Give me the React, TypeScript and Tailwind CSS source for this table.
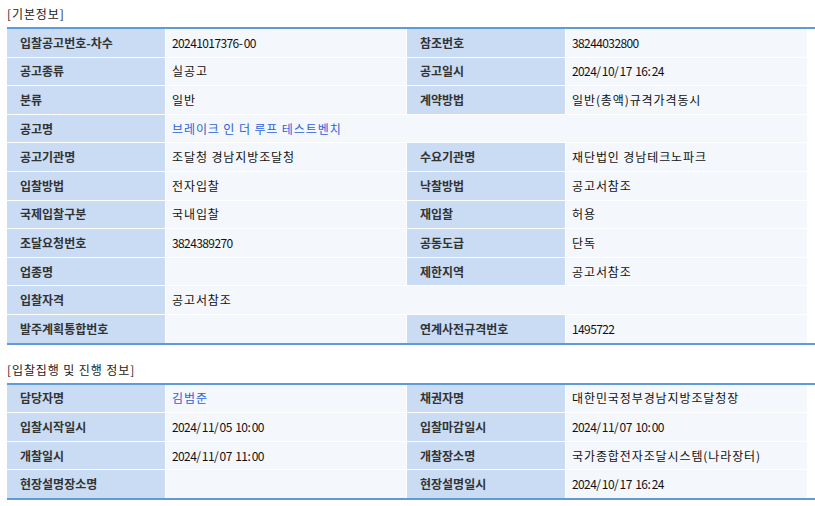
import React from "react";

type Cell = { label: string; value?: string; link?: boolean; span?: boolean };

const basicRows: Cell[][] = [
  [{ label: "입찰공고번호-차수", value: "20241017376-00" }, { label: "참조번호", value: "38244032800" }],
  [{ label: "공고종류", value: "실공고" }, { label: "공고일시", value: "2024/10/17 16:24" }],
  [{ label: "분류", value: "일반" }, { label: "계약방법", value: "일반(총액)규격가격동시" }],
  [{ label: "공고명", value: "브레이크 인 더 루프 테스트벤치", link: true, span: true }],
  [{ label: "공고기관명", value: "조달청 경남지방조달청" }, { label: "수요기관명", value: "재단법인 경남테크노파크" }],
  [{ label: "입찰방법", value: "전자입찰" }, { label: "낙찰방법", value: "공고서참조" }],
  [{ label: "국제입찰구분", value: "국내입찰" }, { label: "재입찰", value: "허용" }],
  [{ label: "조달요청번호", value: "3824389270" }, { label: "공동도급", value: "단독" }],
  [{ label: "업종명", value: "" }, { label: "제한지역", value: "공고서참조" }],
  [{ label: "입찰자격", value: "공고서참조", span: true }],
  [{ label: "발주계획통합번호", value: "" }, { label: "연계사전규격번호", value: "1495722" }],
];

const bidRows: Cell[][] = [
  [{ label: "담당자명", value: "김범준", link: true }, { label: "채권자명", value: "대한민국정부경남지방조달청장" }],
  [{ label: "입찰시작일시", value: "2024/11/05 10:00" }, { label: "입찰마감일시", value: "2024/11/07 10:00" }],
  [{ label: "개찰일시", value: "2024/11/07 11:00" }, { label: "개찰장소명", value: "국가종합전자조달시스템(나라장터)" }],
  [{ label: "현장설명장소명", value: "" }, { label: "현장설명일시", value: "2024/10/17 16:24" }],
];

// digits in the original font are narrow, hangul a bit wide
function Spaced({ text }: { text: string }) {
  const parts = text.match(/[0-9]+|[^0-9]+/g) ?? [];
  return (
    <>
      {parts.map((p, i) =>
        /^[0-9]/.test(p) ? (
          <span key={i} className="tracking-[-0.6px]">{p}</span>
        ) : (
          <span key={i} className="tracking-[0.9px]">{p}</span>
        )
      )}
    </>
  );
}

function InfoTable({ title, rows, className }: { title: string; rows: Cell[][]; className?: string }) {
  return (
    <section className={className}>
      <div className="h-[27px] pt-[5px] text-[12px] leading-[18px] tracking-[0.9px] text-[#222]">{title}</div>
      <div className="grid grid-cols-[158px_240px_158px_241px] auto-rows-[27.6px] gap-px border-y-2 border-[#5d9cd8] bg-white">
        {rows.map((row) =>
          row.map((c) => (
            <React.Fragment key={c.label}>
              <div className="flex items-center bg-[#c9dcf4] pl-[13px] text-[12px] font-bold text-[#333]">
                {c.label}
              </div>
              <div
                className={
                  "flex items-center whitespace-pre bg-[#f4f7fc] pl-[6px] text-[12px] " +
                  (c.span ? "col-span-3 " : "") +
                  (c.link ? "text-[#2b63d9]" : "text-[#111]")
                }
              >
                <Spaced text={c.value ?? ""} />
              </div>
            </React.Fragment>
          ))
        )}
      </div>
    </section>
  );
}

export default function App() {
  return (
    <div
      className="min-h-[506px] w-[815px] bg-white pl-[7px]"
      style={{ fontFamily: '"Noto Sans CJK KR", "Noto Sans", sans-serif' }}
    >
      <InfoTable title="[기본정보]" rows={basicRows} />
      <InfoTable title="[입찰집행 및 진행 정보]" rows={bidRows} className="mt-[11px]" />
    </div>
  );
}
